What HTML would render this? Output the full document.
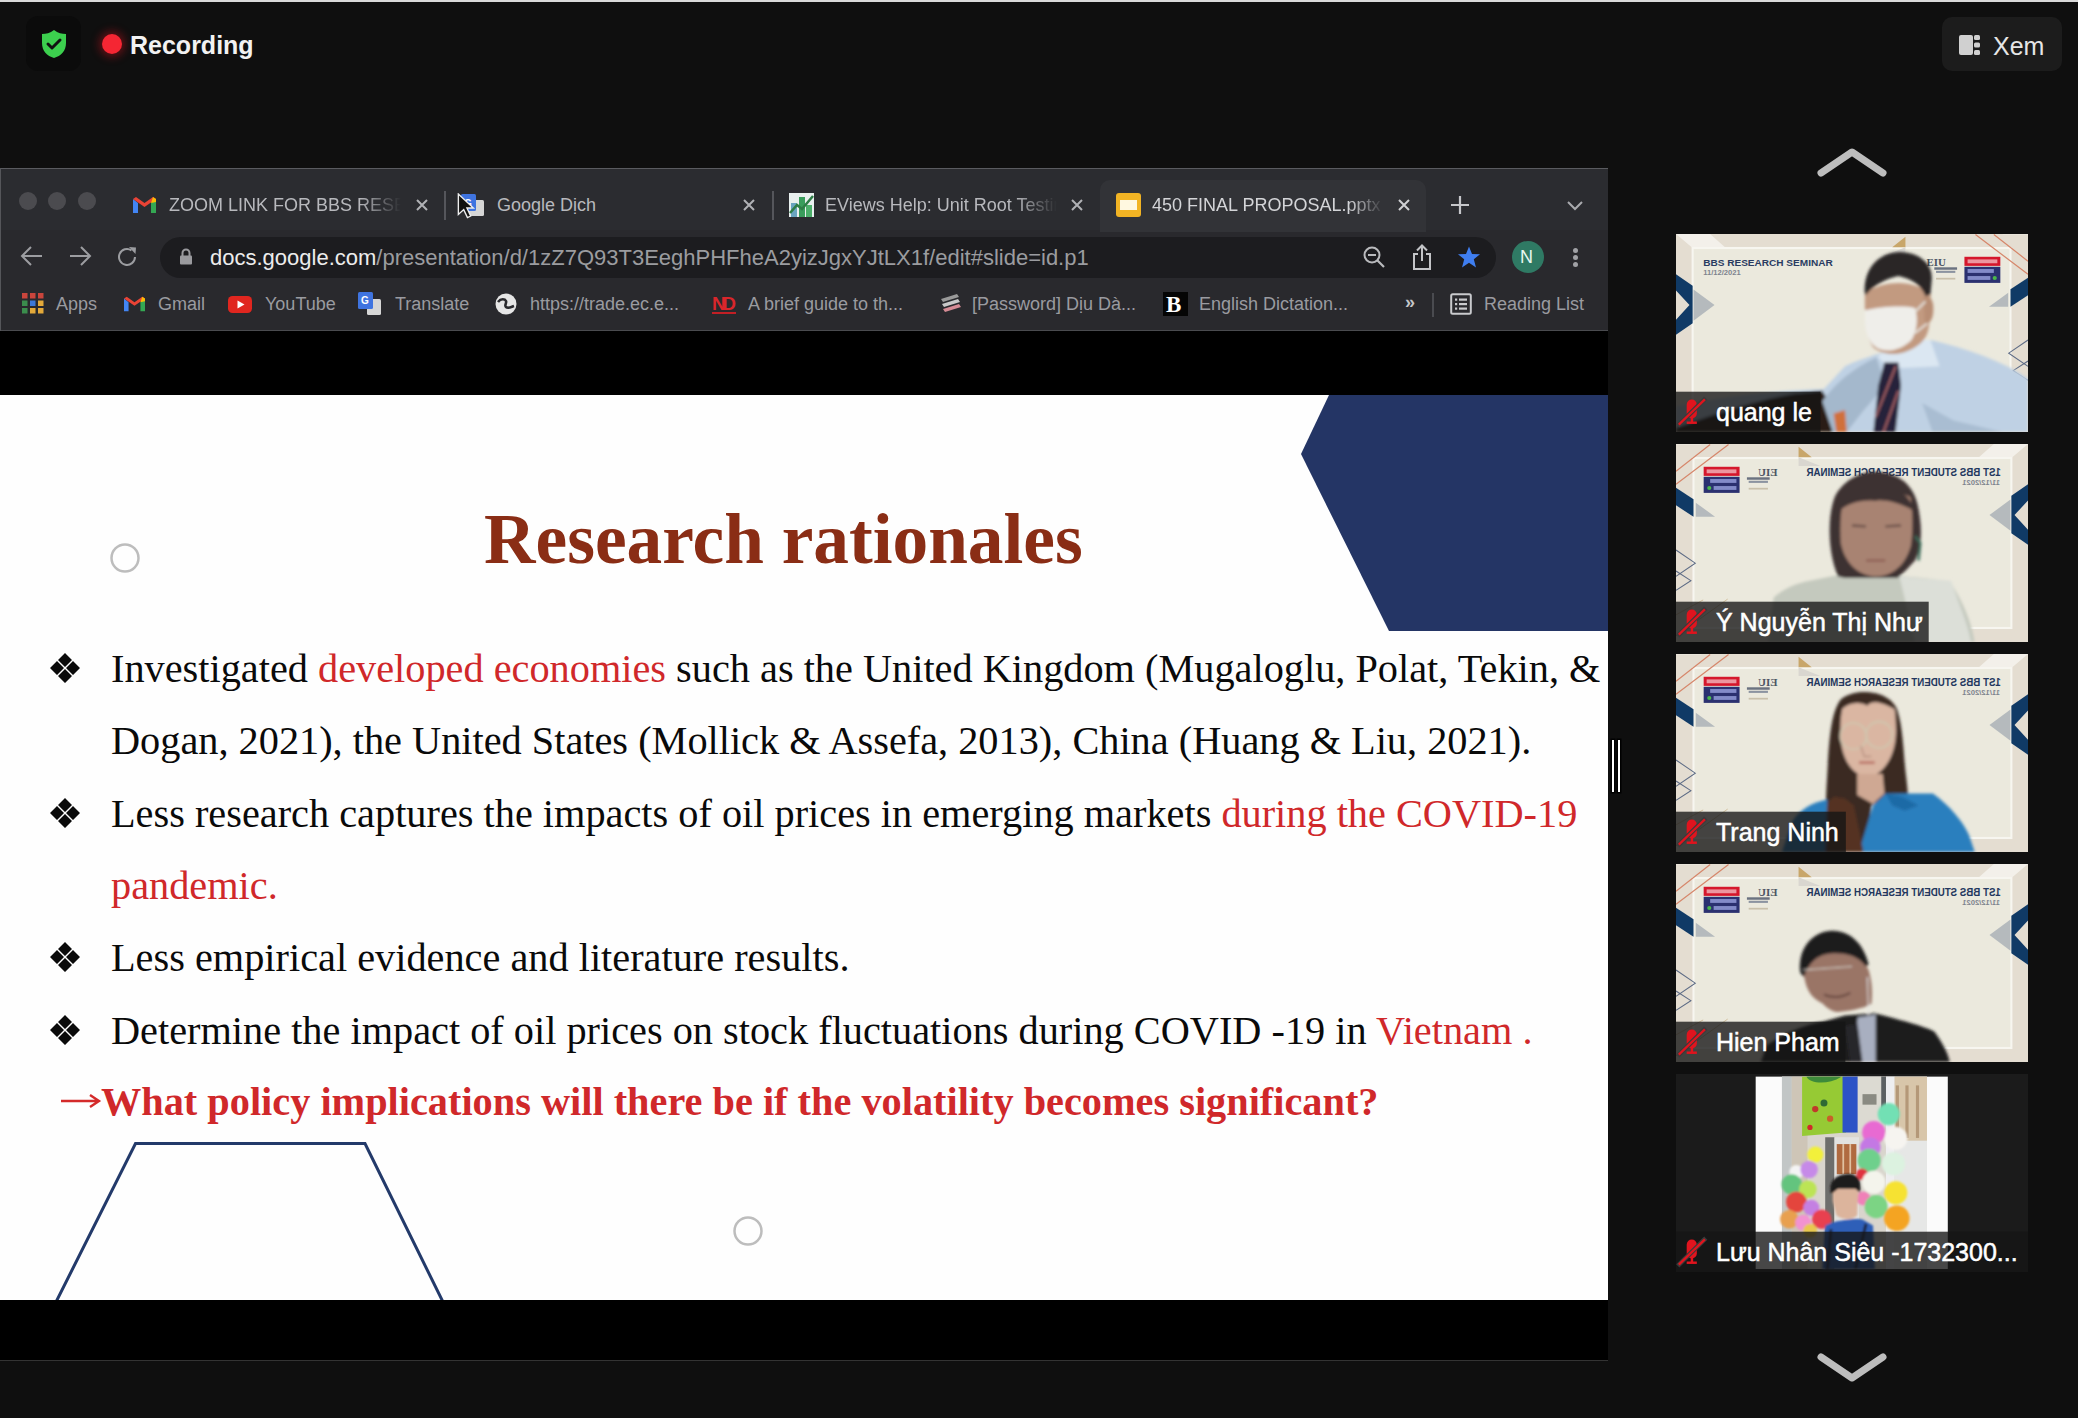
<!DOCTYPE html>
<html><head><meta charset="utf-8">
<style>
*{margin:0;padding:0;box-sizing:border-box}
html,body{width:2078px;height:1418px;overflow:hidden;background:#0f0f0f;font-family:"Liberation Sans",sans-serif}
.a{position:absolute}
.topline{left:0;top:0;width:2078px;height:2px;background:#d9d9d9}
.sans{font-family:"Liberation Sans",sans-serif}
.serif{font-family:"Liberation Serif",serif}
.nw{white-space:nowrap;line-height:1}
/* browser */
#tabs{left:0;top:168px;width:1608px;height:62px;background:#2b2c30;border-top:1px solid #5a5b60}
#tool{left:0;top:230px;width:1608px;height:101px;background:#29292d}
#url{left:160px;top:237px;width:1336px;height:41px;border-radius:21px;background:#1c1c1f}
#bar1{left:0;top:331px;width:1608px;height:64px;background:#000}
#slide{left:0;top:395px;width:1608px;height:905px;background:#fefefe;overflow:hidden}
#bar2{left:0;top:1300px;width:1608px;height:61px;background:#000}
.tab{color:#b8b9bd;font-size:18px}
.bm{color:#9a9ba0;font-size:18px}
.body{font-family:"Liberation Serif",serif;font-size:40.3px;color:#0a0a0a}
.red{color:#d0282a}
.tile{width:352px;height:198px;background:#e8e4dc;overflow:hidden}
.name{color:#fff;font-size:25px;-webkit-text-stroke:0.5px #fff}
</style></head><body>
<div class="a topline"></div>

<!-- top zoom bar -->
<div class="a" style="left:26px;top:16px;width:55px;height:55px;border-radius:12px;background:#0b0b0b"></div>
<svg class="a" style="left:40px;top:29px" width="28" height="30" viewBox="0 0 28 30">
 <path d="M14 1 C10 4 6 5 2 5 L2 14 C2 22 7 27 14 29 C21 27 26 22 26 14 L26 5 C22 5 18 4 14 1Z" fill="#3ccf4e"/>
 <path d="M8 15 L12 19 L20 11" fill="none" stroke="#111" stroke-width="3" stroke-linecap="round" stroke-linejoin="round"/>
</svg>
<div class="a" style="left:102px;top:34px;width:20px;height:20px;border-radius:50%;background:#f52633;box-shadow:0 0 8px 3px rgba(200,20,30,.45)"></div>
<div class="a nw" style="left:130px;top:33px;font-size:25px;font-weight:bold;color:#f2f2f2">Recording</div>

<div class="a" style="left:1942px;top:17px;width:120px;height:54px;border-radius:10px;background:#1c1c1c"></div>
<svg class="a" style="left:1958px;top:34px" width="24" height="22" viewBox="0 0 24 22">
 <rect x="1" y="1" width="14" height="20" rx="2" fill="#d0d0d0"/>
 <rect x="16" y="1" width="6" height="5" rx="1.5" fill="#d0d0d0"/>
 <rect x="16" y="8.5" width="6" height="5" rx="1.5" fill="#d0d0d0"/>
 <rect x="16" y="16" width="6" height="5" rx="1.5" fill="#d0d0d0"/>
</svg>
<div class="a nw" style="left:1993px;top:34px;font-size:25px;color:#e6e6e6">Xem</div>

<!-- browser -->
<div class="a" id="tabs"></div>
<div class="a" id="tool"></div>
<div class="a" id="url"></div>

<!-- traffic lights -->
<div class="a" style="left:19px;top:192px;width:18px;height:18px;border-radius:50%;background:#4b4b4f"></div>
<div class="a" style="left:48px;top:192px;width:18px;height:18px;border-radius:50%;background:#4b4b4f"></div>
<div class="a" style="left:78px;top:192px;width:18px;height:18px;border-radius:50%;background:#4b4b4f"></div>
<!-- active tab bg -->
<div class="a" style="left:1100px;top:180px;width:326px;height:52px;border-radius:10px 10px 0 0;background:#323337"></div>
<!-- tab 1 -->
<svg class="a" style="left:133px;top:197px" width="23" height="16" viewBox="0 0 23 16">
 <path d="M0 2 L0 16 L5 16 L5 6 Z" fill="#4285f4"/><path d="M18 6 L18 16 L23 16 L23 2 Z" fill="#34a853"/>
 <path d="M0 2 L11.5 10 L23 2 L20 0 L11.5 6 L3 0 Z" fill="#ea4335"/><path d="M20 0 L23 2 L23 5 L18 6Z" fill="#fbbc04"/>
</svg>
<div class="a nw tab" style="left:169px;top:196px;width:232px;overflow:hidden;-webkit-mask-image:linear-gradient(90deg,#000 82%,transparent 100%)">ZOOM LINK FOR BBS RESEARCH</div>
<svg class="a" style="left:415px;top:198px" width="14" height="14" viewBox="0 0 14 14"><path d="M2 2L12 12M12 2L2 12" stroke="#b0b1b5" stroke-width="2"/></svg>
<div class="a" style="left:444px;top:191px;width:1.5px;height:29px;background:#55565b"></div>
<!-- tab 2 -->
<svg class="a" style="left:460px;top:193px" width="26" height="24" viewBox="0 0 26 24">
 <rect x="9" y="7" width="15" height="16" rx="1.5" fill="#d6d6d6"/><rect x="1" y="1" width="15" height="17" rx="1.5" fill="#3f74e0"/>
 <text x="4" y="14" font-size="10" font-weight="bold" fill="#fff" font-family="Liberation Sans">G</text>
</svg>
<svg class="a" style="left:456px;top:193px" width="24" height="30" viewBox="0 0 22 28"><path d="M2 1 L2 20 L7 15.5 L10.5 23 L13.5 21.5 L10 14 L16 14 Z" fill="#111" stroke="#eee" stroke-width="1.3"/></svg>
<div class="a nw tab" style="left:497px;top:196px">Google Dịch</div>
<svg class="a" style="left:742px;top:198px" width="14" height="14" viewBox="0 0 14 14"><path d="M2 2L12 12M12 2L2 12" stroke="#b0b1b5" stroke-width="2"/></svg>
<div class="a" style="left:772px;top:191px;width:1.5px;height:29px;background:#55565b"></div>
<!-- tab 3 -->
<svg class="a" style="left:789px;top:193px" width="25" height="24" viewBox="0 0 25 24">
 <rect x="0" y="0" width="25" height="24" fill="#e9f0ef"/><rect x="2" y="10" width="6" height="14" fill="#6aa5c0"/><rect x="10" y="4" width="6" height="20" fill="#3a9d5c"/><rect x="17" y="12" width="6" height="12" fill="#4caf6a"/>
 <path d="M1 20 L8 12 L13 16 L24 3" stroke="#2e7d46" stroke-width="2.5" fill="none"/>
</svg>
<div class="a nw tab" style="left:825px;top:196px;width:232px;overflow:hidden;-webkit-mask-image:linear-gradient(90deg,#000 82%,transparent 100%)">EViews Help: Unit Root Testing</div>
<svg class="a" style="left:1070px;top:198px" width="14" height="14" viewBox="0 0 14 14"><path d="M2 2L12 12M12 2L2 12" stroke="#b0b1b5" stroke-width="2"/></svg>
<!-- tab 4 active -->
<svg class="a" style="left:1116px;top:193px" width="25" height="24" viewBox="0 0 25 24">
 <rect x="0" y="0" width="25" height="24" rx="3" fill="#f2b424"/><rect x="4" y="7" width="17" height="10" fill="#fff8e0"/>
</svg>
<div class="a nw tab" style="left:1152px;top:196px;width:232px;overflow:hidden;color:#d4d5d8;-webkit-mask-image:linear-gradient(90deg,#000 85%,transparent 100%)">450 FINAL PROPOSAL.pptx</div>
<svg class="a" style="left:1397px;top:198px" width="14" height="14" viewBox="0 0 14 14"><path d="M2 2L12 12M12 2L2 12" stroke="#d0d1d4" stroke-width="2"/></svg>
<svg class="a" style="left:1450px;top:195px" width="20" height="20" viewBox="0 0 20 20"><path d="M10 1V19M1 10H19" stroke="#c6c7ca" stroke-width="2.2"/></svg>
<svg class="a" style="left:1566px;top:200px" width="18" height="11" viewBox="0 0 18 11"><path d="M2 2L9 9L16 2" stroke="#a9aaae" stroke-width="2" fill="none"/></svg>

<!-- toolbar icons -->
<svg class="a" style="left:20px;top:245px" width="24" height="22" viewBox="0 0 24 22"><path d="M22 11H3M11 2L2 11L11 20" stroke="#9c9da1" stroke-width="2" fill="none"/></svg>
<svg class="a" style="left:68px;top:245px" width="24" height="22" viewBox="0 0 24 22"><path d="M2 11H21M13 2L22 11L13 20" stroke="#9c9da1" stroke-width="2" fill="none"/></svg>
<svg class="a" style="left:116px;top:245px" width="24" height="24" viewBox="0 0 24 24"><path d="M19 12A8 8 0 1 1 15.5 5.3" stroke="#9c9da1" stroke-width="2" fill="none"/><path d="M13 2L20 2.5L19.5 9Z" fill="#9c9da1"/></svg>
<svg class="a" style="left:179px;top:248px" width="14" height="17" viewBox="0 0 14 17"><path d="M3.5 8V5A3.5 3.5 0 0 1 10.5 5V8" stroke="#9a9a9e" stroke-width="2" fill="none"/><rect x="1" y="7.5" width="12" height="9" rx="1" fill="#9a9a9e"/></svg>
<div class="a nw" style="left:210px;top:247px;font-size:22px;color:#ececec">docs.google.com<span style="color:#9b9ca0">/presentation/d/1zZ7Q93T3EeghPHFheA2yizJgxYJtLX1f/edit#slide=id.p1</span></div>
<svg class="a" style="left:1362px;top:245px" width="24" height="24" viewBox="0 0 24 24"><circle cx="10" cy="10" r="7.5" stroke="#b9babd" stroke-width="2" fill="none"/><path d="M6 10H14M15.5 15.5L22 22" stroke="#b9babd" stroke-width="2.2"/></svg>
<svg class="a" style="left:1411px;top:243px" width="22" height="28" viewBox="0 0 22 28"><path d="M7 11H3V26H19V11H15" stroke="#c3c4c7" stroke-width="2" fill="none"/><path d="M11 18V3M6 7.5L11 2.5L16 7.5" stroke="#c3c4c7" stroke-width="2" fill="none"/></svg>
<svg class="a" style="left:1457px;top:246px" width="24" height="22" viewBox="0 0 24 22"><path d="M12 0.5L15 8L23 8.3L16.8 13.3L19 21.5L12 16.8L5 21.5L7.2 13.3L1 8.3L9 8Z" fill="#3f7ef0"/></svg>
<div class="a" style="left:1512px;top:241px;width:32px;height:32px;border-radius:50%;background:#2f7a64"></div>
<div class="a nw" style="left:1520px;top:248px;font-size:18px;color:#e8f8f0">N</div>
<div class="a" style="left:1573px;top:248px;width:5px;height:5px;border-radius:50%;background:#a0a1a5"></div>
<div class="a" style="left:1573px;top:255px;width:5px;height:5px;border-radius:50%;background:#a0a1a5"></div>
<div class="a" style="left:1573px;top:262px;width:5px;height:5px;border-radius:50%;background:#a0a1a5"></div>

<!-- bookmarks -->
<svg class="a" style="left:22px;top:293px" width="22" height="21" viewBox="0 0 22 21">
 <rect x="0" y="0" width="5.5" height="5.5" fill="#c9453c"/><rect x="8" y="0" width="5.5" height="5.5" fill="#c9453c"/><rect x="16" y="0" width="5.5" height="5.5" fill="#c9453c"/>
 <rect x="0" y="7.5" width="5.5" height="5.5" fill="#3b8d4d"/><rect x="8" y="7.5" width="5.5" height="5.5" fill="#3c78d8"/><rect x="16" y="7.5" width="5.5" height="5.5" fill="#e3a93a"/>
 <rect x="0" y="15" width="5.5" height="5.5" fill="#3b8d4d"/><rect x="8" y="15" width="5.5" height="5.5" fill="#e3a93a"/><rect x="16" y="15" width="5.5" height="5.5" fill="#e3a93a"/>
</svg>
<div class="a nw bm" style="left:56px;top:295px">Apps</div>
<svg class="a" style="left:124px;top:296px" width="21" height="16" viewBox="0 0 23 16">
 <path d="M0 2 L0 16 L5 16 L5 6 Z" fill="#4285f4"/><path d="M18 6 L18 16 L23 16 L23 2 Z" fill="#34a853"/>
 <path d="M0 2 L11.5 10 L23 2 L20 0 L11.5 6 L3 0 Z" fill="#ea4335"/><path d="M20 0 L23 2 L23 5 L18 6Z" fill="#fbbc04"/>
</svg>
<div class="a nw bm" style="left:158px;top:295px">Gmail</div>
<svg class="a" style="left:228px;top:296px" width="24" height="17" viewBox="0 0 24 17"><rect x="0" y="0" width="24" height="17" rx="4.5" fill="#e0261f"/><path d="M9.5 4.5L16.5 8.5L9.5 12.5Z" fill="#fff"/></svg>
<div class="a nw bm" style="left:265px;top:295px">YouTube</div>
<svg class="a" style="left:358px;top:292px" width="24" height="24" viewBox="0 0 24 24">
 <rect x="9" y="7" width="14" height="16" rx="1.5" fill="#d6d6d6"/><rect x="0" y="0" width="15" height="17" rx="1.5" fill="#3f74e0"/>
 <text x="3" y="12" font-size="10" font-weight="bold" fill="#fff" font-family="Liberation Sans">G</text>
</svg>
<div class="a nw bm" style="left:395px;top:295px">Translate</div>
<svg class="a" style="left:495px;top:293px" width="22" height="22" viewBox="0 0 22 22"><circle cx="11" cy="11" r="10.5" fill="#e6e6e6"/><path d="M3 9C6 5 10 6 11 8C12 10 9 12 11 14C13 16 16 14 19 13" stroke="#2a2a2e" stroke-width="2.6" fill="none"/></svg>
<div class="a nw bm" style="left:530px;top:295px">https://trade.ec.e...</div>
<svg class="a" style="left:712px;top:292px" width="25" height="23" viewBox="0 0 25 23"><text x="0" y="18" font-size="19" font-weight="bold" fill="#d9262b" font-family="Liberation Sans" textLength="24">ND</text><rect x="0" y="20" width="24" height="2" fill="#c21f25"/></svg>
<div class="a nw bm" style="left:748px;top:295px">A brief guide to th...</div>
<svg class="a" style="left:939px;top:293px" width="23" height="20" viewBox="0 0 23 20"><path d="M2 6L18 1L20 4L4 9Z" fill="#9a9a9a"/><path d="M3 11L19 6L21 9L5 14Z" fill="#c9c9c9"/><path d="M4 16L20 11L22 14L6 19Z" fill="#d58b95"/></svg>
<div class="a nw bm" style="left:972px;top:295px">[Password] Dịu Dà...</div>
<div class="a" style="left:1163px;top:292px;width:25px;height:24px;background:#050505"></div>
<div class="a nw serif" style="left:1166px;top:293px;font-size:23px;font-weight:bold;color:#fff">B</div>
<div class="a nw bm" style="left:1199px;top:295px">English Dictation...</div>
<div class="a nw" style="left:1405px;top:293px;font-size:18px;font-weight:bold;color:#c5c6c9">»</div>
<div class="a" style="left:1432px;top:293px;width:2px;height:24px;background:#4a4b50"></div>
<svg class="a" style="left:1450px;top:293px" width="22" height="22" viewBox="0 0 22 22"><rect x="1.2" y="1.2" width="19.6" height="19.6" rx="1.5" stroke="#c9cacd" stroke-width="2" fill="none"/><rect x="5" y="5.5" width="2.2" height="2.2" fill="#c9cacd"/><rect x="9" y="5.5" width="8" height="2.2" fill="#c9cacd"/><rect x="5" y="10" width="2.2" height="2.2" fill="#c9cacd"/><rect x="9" y="10" width="8" height="2.2" fill="#c9cacd"/><rect x="5" y="14.5" width="2.2" height="2.2" fill="#c9cacd"/><rect x="9" y="14.5" width="8" height="2.2" fill="#c9cacd"/></svg>
<div class="a nw bm" style="left:1484px;top:295px">Reading List</div>

<div class="a" style="left:0;top:330px;width:1608px;height:1px;background:#4a4b4f"></div>
<div class="a" style="left:0;top:168px;width:1px;height:163px;background:#55565a"></div>
<div class="a" id="bar1"></div>

<div class="a" id="slide">
 <svg class="a" style="left:0;top:0" width="1608" height="905" viewBox="0 395 1608 905">
  <polygon points="1329,395 1608,395 1608,631 1389,631 1301,454" fill="#243565"/>
  <circle cx="125" cy="558" r="13.5" fill="none" stroke="#bdbdbd" stroke-width="2.5"/>
  <circle cx="748" cy="1231" r="13.5" fill="none" stroke="#bdbdbd" stroke-width="2.5"/>
  <polyline points="56,1302 135.5,1143.5 365,1143.5 443,1302" fill="none" stroke="#233a6a" stroke-width="3"/>
 </svg>
 <div class="a nw serif" style="left:484px;top:108px;font-size:71.3px;font-weight:bold;color:#8a2d15">Research rationales</div>
 <div class="a nw body" style="left:111px;top:254px">Investigated <span class="red">developed economies</span> such as the United Kingdom (Mugaloglu, Polat, Tekin, &amp;</div>
 <div class="a nw body" style="left:111px;top:326px">Dogan, 2021), the United States (Mollick &amp; Assefa, 2013), China (Huang &amp; Liu, 2021).</div>
 <div class="a nw body" style="left:111px;top:399px">Less research captures the impacts of oil prices in emerging markets <span class="red">during the COVID-19</span></div>
 <div class="a nw body red" style="left:111px;top:471px">pandemic.</div>
 <div class="a nw body" style="left:111px;top:543px">Less empirical evidence and literature results.</div>
 <div class="a nw body" style="left:111px;top:616px">Determine the impact of oil prices on stock fluctuations during COVID -19 in <span class="red">Vietnam .</span></div>
 <div class="a nw body red" style="left:101px;top:687px;font-weight:bold">What policy implications will there be if the volatility becomes significant?</div>
 <svg class="a" style="left:60px;top:698px" width="42" height="16" viewBox="0 0 42 16"><path d="M1 8H38M30 2L39 8L30 14" stroke="#d42a2a" stroke-width="2.4" fill="none"/></svg>
 <svg class="a" style="left:50px;top:258px" width="30" height="30" viewBox="0 0 30 30"><path d="M15 0L22 7L15 14L8 7Z M15 16L22 23L15 30L8 23Z M0 15L7 8L14 15L7 22Z M16 15L23 8L30 15L23 22Z" fill="#0a0a0a"/></svg>
<svg class="a" style="left:50px;top:403px" width="30" height="30" viewBox="0 0 30 30"><path d="M15 0L22 7L15 14L8 7Z M15 16L22 23L15 30L8 23Z M0 15L7 8L14 15L7 22Z M16 15L23 8L30 15L23 22Z" fill="#0a0a0a"/></svg>
<svg class="a" style="left:50px;top:547px" width="30" height="30" viewBox="0 0 30 30"><path d="M15 0L22 7L15 14L8 7Z M15 16L22 23L15 30L8 23Z M0 15L7 8L14 15L7 22Z M16 15L23 8L30 15L23 22Z" fill="#0a0a0a"/></svg>
<svg class="a" style="left:50px;top:620px" width="30" height="30" viewBox="0 0 30 30"><path d="M15 0L22 7L15 14L8 7Z M15 16L22 23L15 30L8 23Z M0 15L7 8L14 15L7 22Z M16 15L23 8L30 15L23 22Z" fill="#0a0a0a"/></svg>

</div>

<div class="a" id="bar2"></div>
<div class="a" style="left:0;top:1360px;width:1608px;height:1px;background:#333"></div>

<!-- right panel -->
<svg width="0" height="0" style="position:absolute">
<defs>
 <filter id="bl" x="-10%" y="-10%" width="120%" height="120%"><feGaussianBlur stdDeviation="9"/></filter>
 <filter id="bl2" x="-10%" y="-10%" width="120%" height="120%"><feGaussianBlur stdDeviation="6"/></filter>
 <g id="bg">
  <rect x="35" y="35" width="2010" height="1130" fill="#e4ddd1"/>
  <polygon points="35,35 230,35 320,115 130,115" fill="#f3f0ea"/>
  <rect x="130" y="115" width="1815" height="970" fill="#ebe9dd" stroke="#f7f6f0" stroke-width="12"/>
  <polygon points="35,265 130,330 130,545 35,610 35,525 112,440 35,358" fill="#103a66"/>
  <polygon points="135,352 255,440 135,530" fill="#b5babd"/>
  <polygon points="1945,350 2045,285 2045,385 1945,450" fill="#103a66"/>
  <polygon points="1822,450 1932,370 1932,450" fill="#b5babd"/>
  <polygon points="1270,110 1345,50 1345,110" fill="#c8a66a"/>
  <polygon points="1345,110 1345,160 1220,160" fill="#d9d6d0"/>
  <path d="M1745,38 L2045,265 M1850,38 L2045,190" stroke="#d6866a" stroke-width="7" fill="none"/>
  <path d="M2045,640 L1935,715 L2045,790 M2045,760 L1960,815 L2045,870" stroke="#5d6b85" stroke-width="6" fill="none"/>
  <path d="M1900,35 L2045,35" stroke="#f3f0ea" stroke-width="4"/>
  <rect x="1682" y="165" width="205" height="52" fill="#d5172c"/>
  <rect x="1682" y="222" width="205" height="92" fill="#2b3170"/>
  <rect x="1700" y="180" width="170" height="22" fill="#f3b7bd" opacity=".8"/>
  <rect x="1700" y="235" width="150" height="22" fill="#9aa3e0" opacity=".8"/>
  <rect x="1700" y="275" width="130" height="22" fill="#9aa3e0" opacity=".8"/>
  <circle cx="1855" cy="286" r="12" fill="#4bb84a"/>
  <text x="1465" y="215" font-family="Liberation Serif" font-size="62" font-weight="bold" fill="#4b5563">EIU</text>
  <rect x="1510" y="225" width="130" height="14" fill="#6b7280"/>
  <rect x="1520" y="245" width="110" height="12" fill="#8b93a0"/>
  <rect x="1520" y="285" width="110" height="10" fill="#c9c0ab"/>
 </g>
 <g id="mic">
  <rect x="96" y="980" width="58" height="108" rx="29" fill="#e0141e"/>
  <rect x="119" y="1085" width="14" height="25" fill="#e0141e"/>
  <rect x="96" y="1105" width="58" height="14" fill="#e0141e"/>
  <path d="M45,1130 L205,972" stroke="#3a3a3a" stroke-width="26"/>
  <path d="M51,1123 L200,979" stroke="#e0141e" stroke-width="13"/>
 </g>
</defs></svg>
<div class="a tile" style="left:1676px;top:234px">
<svg class="a" style="left:0;top:0" width="352" height="198" viewBox="35 35 2010 1130" preserveAspectRatio="none">
<use href="#bg"/>
<text x="190" y="216" font-family="Liberation Sans" font-size="57" font-weight="bold" fill="#2a3c62" textLength="740" lengthAdjust="spacingAndGlyphs">BBS RESEARCH SEMINAR</text>
<text x="190" y="268" font-family="Liberation Sans" font-size="44" font-weight="bold" fill="#7e848e" textLength="215" lengthAdjust="spacingAndGlyphs">11/12/2021</text>
<g filter="url(#bl)">
 <path d="M35,1165 L35,1020 C300,960 600,930 880,920 L1000,790 C1100,740 1250,700 1490,640 C1700,690 1900,760 2045,860 L2045,1165Z" fill="#bfd1e4"/>
 <path d="M35,1165 L35,1140 C150,1100 450,990 713,945 L870,930 L1010,1165Z" fill="#2a1d15"/>
 <path d="M870,990 C950,880 1050,800 1180,740 L1230,900 L1100,1050 L1010,1165 L930,1165Z" fill="#a4b8cc"/>
 <path d="M1186,736 L1305,640 L1488,640 L1540,790 L1330,800 L1230,780Z" fill="#dbe7f2"/>
 <path d="M1225,768 L1305,768 L1320,900 L1289,1165 L1162,1165 L1190,900Z" fill="#25243a"/>
 <path d="M1290,790 L1175,1080 M1305,930 L1220,1165" stroke="#c47070" stroke-width="8"/>
 <path d="M1440,1000 L1620,1100 L1900,1165 L1500,1165Z" fill="#a9bdd2"/>
 <path d="M935,1060 L1000,1040 L1010,1165 L950,1165Z" fill="#d0703a"/>
 <path d="M1114,369 C1110,500 1120,620 1160,680 C1200,720 1280,730 1340,710 C1420,680 1470,640 1480,560 L1490,380 C1400,300 1250,290 1114,369Z" fill="#c29a80"/>
 <path d="M1449,393 C1490,380 1510,420 1504,480 C1500,530 1480,550 1455,545Z" fill="#b88e74"/>
 <path d="M1114,380 C1100,250 1180,140 1313,138 C1430,140 1500,210 1496,289 L1488,380 L1460,390 C1440,330 1380,290 1305,275 C1230,290 1160,330 1122,380Z" fill="#2a2828"/>
 <path d="M1114,470 C1200,450 1330,440 1400,457 C1420,520 1410,590 1380,640 C1330,690 1260,710 1209,696 C1150,680 1120,620 1114,540Z" fill="#efeeea"/>
 <path d="M1400,480 L1460,420 M1400,600 L1470,545" stroke="#e8e7e2" stroke-width="10"/>
</g>
<rect x="35" y="935" width="825" height="230" fill="#141414" fill-opacity=".78"/>
<use href="#mic"/>
</svg>
<div class="a nw name" style="left:40px;top:165.5px">quang le</div>
</div>
<div class="a tile" style="left:1676px;top:444px">
<svg class="a" style="left:0;top:0" width="352" height="198" viewBox="35 35 2010 1130" preserveAspectRatio="none">
<g transform="translate(2080,0) scale(-1,1)"><use href="#bg"/>
<text x="190" y="215" font-family="Liberation Sans" font-size="60" font-weight="bold" fill="#23375e" textLength="1110" lengthAdjust="spacingAndGlyphs">1ST BBS STUDENT RESEARCH SEMINAR</text>
<text x="195" y="268" font-family="Liberation Sans" font-size="44" font-weight="bold" fill="#7e848e" textLength="215" lengthAdjust="spacingAndGlyphs">11/12/2021</text>
<path d="M2045,1130 L1750,920 M2045,1010 L1890,925" stroke="#cdb993" stroke-width="5" fill="none"/>
</g>
<g filter="url(#bl)">
 <path d="M560,1165 L593,911 C650,860 720,830 800,815 L1032,768 L1330,790 C1450,800 1560,810 1606,830 C1680,950 1720,1050 1740,1165Z" fill="#c4c9be"/>
 <path d="M1311,791 L1606,815 C1650,950 1700,1050 1720,1165 L1400,1165Z" fill="#dcdfd8"/>
 <path d="M960,791 C900,650 900,450 940,340 C1000,220 1120,190 1175,194 C1300,200 1400,260 1422,417 C1440,520 1440,620 1400,700 L1351,752 L1300,800 L1000,800Z" fill="#3d3031"/>
 <path d="M990,360 C1050,300 1300,290 1375,340 C1390,450 1385,560 1375,620 C1340,740 1260,790 1175,791 C1080,790 1000,720 976,600 C970,500 975,420 990,360Z" fill="#a88372"/>
 <path d="M960,420 C1000,300 1100,280 1180,282 C1280,285 1360,300 1400,420 C1300,360 1200,350 1175,360 C1100,350 1020,370 960,420Z" fill="#3d3031"/>
 <path d="M1040,500 L1120,505 M1230,505 L1320,500" stroke="#6a5048" stroke-width="14"/>
 <path d="M1120,700 L1230,700" stroke="#8a5a50" stroke-width="12"/>
 <path d="M1400,560 L1430,600 L1420,700" stroke="#3a6a58" stroke-width="14" fill="none"/>
</g>
<rect x="35" y="935" width="1443" height="230" fill="#141414" fill-opacity=".78"/>
<use href="#mic"/>
</svg>
<div class="a nw name" style="left:40px;top:165.5px">Ý Nguyễn Thị Như</div>
</div>
<div class="a tile" style="left:1676px;top:654px">
<svg class="a" style="left:0;top:0" width="352" height="198" viewBox="35 35 2010 1130" preserveAspectRatio="none">
<g transform="translate(2080,0) scale(-1,1)"><use href="#bg"/>
<text x="190" y="215" font-family="Liberation Sans" font-size="60" font-weight="bold" fill="#23375e" textLength="1110" lengthAdjust="spacingAndGlyphs">1ST BBS STUDENT RESEARCH SEMINAR</text>
<text x="195" y="268" font-family="Liberation Sans" font-size="44" font-weight="bold" fill="#7e848e" textLength="215" lengthAdjust="spacingAndGlyphs">11/12/2021</text>
<path d="M2045,1130 L1750,920 M2045,1010 L1890,925" stroke="#cdb993" stroke-width="5" fill="none"/>
</g>
<g filter="url(#bl)">
 <path d="M888,1165 C885,1000 890,850 900,700 C910,500 925,350 980,290 C1040,250 1100,250 1127,253 C1200,260 1280,300 1300,360 C1330,450 1335,600 1345,700 C1355,780 1360,830 1359,850 L1231,850 L1150,900 L1119,1165Z" fill="#3a2a24"/>
 <path d="M640,1165 L700,990 C740,920 820,880 900,865 L905,1165Z" fill="#2b7fbe"/>
 <path d="M1080,1165 L1160,900 L1231,831 L1502,831 C1600,900 1680,1000 1709,1071 L1741,1165Z" fill="#2b7fbe"/>
 <path d="M1231,831 L1330,850 L1420,900 L1340,930 L1270,900Z" fill="#1f6aa6"/>
 <path d="M898,880 C893,1000 890,1100 888,1165 L1105,1165 C1090,1080 1070,990 1050,900 L1000,860 L940,850Z" fill="#553024"/>
 <path d="M992,313 C1080,290 1200,290 1279,313 C1290,400 1295,480 1287,528 C1270,650 1200,736 1127,736 C1050,730 990,650 976,528 C970,450 975,380 992,313Z" fill="#dab6a2"/>
 <path d="M1070,720 L1215,720 L1225,831 L1160,890 L1070,840Z" fill="#cfa893"/>
 <path d="M960,330 C1000,270 1100,250 1127,253 C1200,255 1280,290 1300,360 C1200,300 1150,300 1127,330 C1080,300 1000,310 960,380Z" fill="#3a2a24"/>
 <circle cx="1048" cy="504" r="75" fill="none" stroke="#cfc8b0" stroke-width="9"/>
 <circle cx="1195" cy="496" r="75" fill="none" stroke="#cfc8b0" stroke-width="9"/>
 <path d="M1080,655 L1170,655" stroke="#b86a60" stroke-width="14"/>
 <path d="M1090,560 L1110,620 L1150,620" stroke="#b89080" stroke-width="8" fill="none"/>
</g>
<rect x="35" y="935" width="970" height="230" fill="#141414" fill-opacity=".78"/>
<use href="#mic"/>
</svg>
<div class="a nw name" style="left:40px;top:165.5px">Trang Ninh</div>
</div>
<div class="a tile" style="left:1676px;top:864px">
<svg class="a" style="left:0;top:0" width="352" height="198" viewBox="35 35 2010 1130" preserveAspectRatio="none">
<g transform="translate(2080,0) scale(-1,1)"><use href="#bg"/>
<text x="190" y="215" font-family="Liberation Sans" font-size="60" font-weight="bold" fill="#23375e" textLength="1110" lengthAdjust="spacingAndGlyphs">1ST BBS STUDENT RESEARCH SEMINAR</text>
<text x="195" y="268" font-family="Liberation Sans" font-size="44" font-weight="bold" fill="#7e848e" textLength="215" lengthAdjust="spacingAndGlyphs">11/12/2021</text>
<path d="M2045,1130 L1750,920 M2045,1010 L1890,925" stroke="#cdb993" stroke-width="5" fill="none"/>
</g>
<g filter="url(#bl)">
 <path d="M520,1165 L553,1071 C650,1000 780,950 872,935 L1000,900 L1167,887 C1300,920 1450,960 1510,991 C1560,1060 1590,1120 1598,1165Z" fill="#1c1a1d"/>
 <path d="M1072,911 L1175,895 L1175,1165 L1056,1165Z" fill="#a8afc0"/>
 <path d="M1000,960 L1072,950 L1100,1165 L1030,1165Z" fill="#26252c"/>
 <path d="M761,632 C770,740 800,800 872,831 C900,860 930,880 960,879 C1060,870 1130,850 1151,831 C1160,760 1150,690 1135,640 C1100,560 1000,530 900,540 C820,560 770,590 761,632Z" fill="#9a7566"/>
 <path d="M745,656 C730,540 790,430 912,417 C1010,410 1100,470 1135,608 L1120,620 C1080,560 1000,540 930,545 C860,550 800,580 765,680Z" fill="#1f1b1c"/>
 <path d="M760,640 L1040,620" stroke="#d8d4cc" stroke-width="6"/>
 <path d="M1128,680 L1135,900" stroke="#e6e6e6" stroke-width="6"/>
 <path d="M880,780 C920,800 980,800 1030,770" stroke="#5a3a34" stroke-width="10" fill="none"/>
</g>
<rect x="35" y="935" width="967" height="230" fill="#141414" fill-opacity=".78"/>
<use href="#mic"/>
</svg>
<div class="a nw name" style="left:40px;top:165.5px">Hien Pham</div>
</div>
<div class="a tile" style="left:1676px;top:1074px">
<svg class="a" style="left:0;top:0" width="352" height="198" viewBox="35 35 2010 1130" preserveAspectRatio="none">
<rect x="35" y="35" width="2010" height="1130" fill="#1b1b1b"/>
<g>
 <rect x="490" y="50" width="1097" height="1098" fill="#fbfbfb"/>
 <rect x="640" y="50" width="828" height="1098" fill="#d9d5cd"/>
 <rect x="640" y="50" width="56" height="1098" fill="#c2c6c6"/>
 <rect x="696" y="50" width="90" height="1098" fill="#cec5b7"/>
 <rect x="1234" y="50" width="50" height="1098" fill="#eeeef0"/>
 <rect x="1283" y="50" width="185" height="366" fill="#d8c6aa"/>
 <rect x="1290" y="100" width="18" height="300" fill="#b49878"/><rect x="1345" y="100" width="18" height="300" fill="#b49878"/><rect x="1405" y="100" width="18" height="300" fill="#b49878"/>
 <rect x="1283" y="416" width="185" height="732" fill="#e6e7e6"/>
 <rect x="1072" y="50" width="135" height="313" fill="#dcdad2"/>
 <rect x="1100" y="150" width="80" height="60" fill="#8a8a82"/>
 <rect x="1207" y="50" width="27" height="240" fill="#5c6062"/>
 <rect x="887" y="396" width="53" height="752" fill="#6e6e6c"/>
 <rect x="940" y="396" width="140" height="752" fill="#e2e2e0"/>
 <rect x="953" y="435" width="112" height="172" fill="#b06a40"/>
 <rect x="985" y="435" width="10" height="172" fill="#e0c0a0"/><rect x="1025" y="435" width="10" height="172" fill="#e0c0a0"/>
 <polygon points="755,50 1006,50 1006,369 755,389" fill="#96ca34"/>
 <path d="M780,50 C800,90 900,100 980,50Z" fill="#3d8a3a"/>
 <circle cx="880" cy="200" r="20" fill="#2f6a34"/><circle cx="830" cy="235" r="18" fill="#c03a2a"/><circle cx="915" cy="290" r="18" fill="#c8602a"/><circle cx="800" cy="340" r="15" fill="#d02a2a"/>
 <rect x="986" y="50" width="86" height="319" fill="#2c52c6"/>
 <g filter="url(#bl2)">
 <circle cx="1250" cy="264" r="63" fill="#72e0b4"/>
 <circle cx="1290" cy="402" r="66" fill="#f6f4f0"/>
 <circle cx="1164" cy="369" r="66" fill="#e86ad2"/>
 <circle cx="1145" cy="455" r="59" fill="#c478e4"/>
 <circle cx="1277" cy="547" r="66" fill="#dcf2e0"/>
 <circle cx="1138" cy="528" r="66" fill="#6ed08c"/>
 <circle cx="1098" cy="607" r="33" fill="#e03040"/>
 <circle cx="1164" cy="653" r="66" fill="#f4f4ec"/>
 <circle cx="1290" cy="713" r="66" fill="#f6e232"/>
 <circle cx="1105" cy="745" r="40" fill="#f080b8"/>
 <circle cx="1178" cy="792" r="66" fill="#7cd484"/>
 <circle cx="1296" cy="858" r="73" fill="#f4a422"/>
 <circle cx="831" cy="495" r="46" fill="#f2f03a"/>
 <circle cx="722" cy="594" r="40" fill="#f4f4f4"/>
 <circle cx="795" cy="580" r="50" fill="#c68ae8"/>
 <circle cx="696" cy="666" r="59" fill="#64c47e"/>
 <circle cx="788" cy="693" r="50" fill="#bce454"/>
 <circle cx="722" cy="765" r="59" fill="#e4443e"/>
 <circle cx="808" cy="798" r="46" fill="#c480e2"/>
 <circle cx="682" cy="864" r="53" fill="#e8a050"/>
 <circle cx="867" cy="864" r="56" fill="#e84050"/>
 <circle cx="762" cy="884" r="46" fill="#f292d2"/>
 <circle cx="801" cy="930" r="40" fill="#e8c850"/>
 <path d="M870,1148 L887,900 C940,870 1050,858 1100,865 L1160,900 L1170,1148Z" fill="#2f5fb8"/>
 <path d="M920,920 L900,1148 M1120,890 L1060,1148" stroke="#1a2030" stroke-width="16"/>
 <path d="M930,700 C925,640 990,615 1040,620 C1085,635 1080,700 1072,760 L1070,840 C1050,870 980,870 950,840 L930,760Z" fill="#dcb49c"/>
 <path d="M922,720 C900,650 950,600 1040,607 C1095,620 1092,680 1085,713 L1060,690 L960,690Z" fill="#1e1a1a"/>
 </g>
</g>
<rect x="35" y="935" width="2010" height="230" fill="#141414" fill-opacity=".78"/>
<use href="#mic"/>
</svg>
<div class="a nw name" style="left:40px;top:165.5px">Lưu Nhân Siêu -1732300...</div>
</div>
<svg class="a" style="left:1816px;top:146px" width="72" height="32" viewBox="0 0 72 32"><path d="M5 27L36 6L67 27" stroke="#bdbdbd" stroke-width="7" stroke-linecap="round" stroke-linejoin="round" fill="none"/></svg>
<svg class="a" style="left:1816px;top:1352px" width="72" height="32" viewBox="0 0 72 32"><path d="M5 5L36 26L67 5" stroke="#bdbdbd" stroke-width="7" stroke-linecap="round" stroke-linejoin="round" fill="none"/></svg>
<div class="a" style="left:1612px;top:740px;width:2.4px;height:52px;background:#fff;box-shadow:0 0 0 1.5px #000"></div>
<div class="a" style="left:1618px;top:740px;width:2.4px;height:52px;background:#fff;box-shadow:0 0 0 1.5px #000"></div>

</body></html>
